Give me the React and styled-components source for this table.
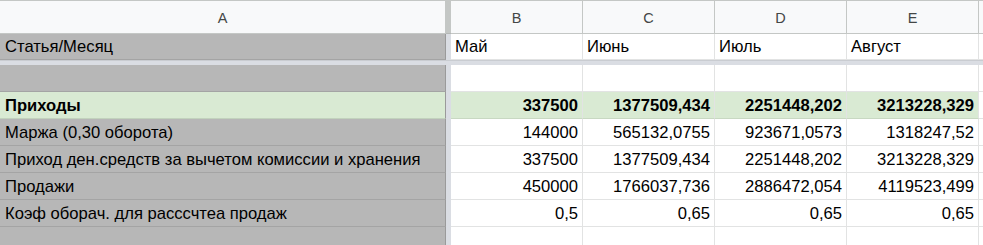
import React from 'react'
import styled, { createGlobalStyle } from 'styled-components'

const GlobalStyle = createGlobalStyle`
  html, body {
    margin: 0;
    padding: 0;
    background: #ffffff;
  }
  body {
    font-family: 'Liberation Sans', Arial, sans-serif;
    overflow: hidden;
  }
`

const columns = ['B', 'C', 'D', 'E']

const rows = [
  { label: 'Статья/Месяц', values: ['Май', 'Июнь', 'Июль', 'Август'], align: 'left' },
  { divider: true },
  { label: '', values: ['', '', '', ''] },
  {
    label: 'Приходы',
    values: ['337500', '1377509,434', '2251448,202', '3213228,329'],
    bold: true,
    green: true,
  },
  { label: 'Маржа (0,30 оборота)', values: ['144000', '565132,0755', '923671,0573', '1318247,52'] },
  {
    label: 'Приход ден.средств за вычетом комиссии и хранения',
    values: ['337500', '1377509,434', '2251448,202', '3213228,329'],
  },
  { label: 'Продажи', values: ['450000', '1766037,736', '2886472,054', '4119523,499'] },
  { label: 'Коэф оборач. для расссчтеа продаж', values: ['0,5', '0,65', '0,65', '0,65'] },
  { label: '', values: ['', '', '', ''] },
]

export default function App() {
  return (
    <>
      <GlobalStyle />
      <Sheet>
        <ColHeader $wide>A</ColHeader>
        <HeaderFreeze />
        {columns.map((c) => (
          <ColHeader key={c}>{c}</ColHeader>
        ))}
        <HeaderRest />

        {rows.map((row, i) =>
          row.divider ? (
            <FreezeRow key={i} />
          ) : (
            <React.Fragment key={i}>
              <LabelCell $bold={row.bold} $green={row.green}>
                {row.label}
              </LabelCell>
              <FreezeCol />
              {row.values.map((v, j) => (
                <Cell
                  key={j}
                  $bold={row.bold}
                  $green={row.green}
                  $align={row.align || 'right'}
                >
                  {v}
                </Cell>
              ))}
              <RestCell />
            </React.Fragment>
          )
        )}
      </Sheet>
    </>
  )
}

const Sheet = styled.div`
  display: grid;
  grid-template-columns: 446px 5px 132px 132px 132px 132px 1fr;
  grid-template-rows: 33px 26px 5px repeat(7, 27px);
  width: 983px;
  height: 245px;
  overflow: hidden;
  border-top: 1px solid #c4c7c5;
  box-sizing: border-box;
  font-size: 16.6px;
  color: #000000;
`

const ColHeader = styled.div`
  display: flex;
  align-items: center;
  justify-content: center;
  background: #f8f9fa;
  border-right: 1px solid #c4c7c5;
  border-bottom: 1px solid #c4c7c5;
  color: #444746;
  font-size: 14.5px;
  padding-top: 1px;
  box-sizing: border-box;
`

const HeaderFreeze = styled.div`
  background: #c4c7c5;
  border-bottom: 1px solid #b4b7b5;
`

const HeaderRest = styled.div`
  background: #f8f9fa;
  border-bottom: 1px solid #c4c7c5;
  box-sizing: border-box;
`

const FreezeRow = styled.div`
  grid-column: 1 / -1;
  background: #dadde3;
  border-top: 1px solid #c9ccd1;
  box-sizing: border-box;
`

const FreezeCol = styled.div`
  background: #dadde3;
`

const BaseCell = styled.div`
  display: flex;
  align-items: center;
  padding: 1px 4px 0 5px;
  box-sizing: border-box;
  white-space: nowrap;
  overflow: hidden;
  font-weight: ${(p) => (p.$bold ? 700 : 400)};
`

const LabelCell = styled(BaseCell)`
  background: ${(p) => (p.$green ? '#d9ead3' : '#b7b7b7')};
  border-right: 1px solid #9a9a9a;
  border-bottom: 1px solid rgba(0, 0, 0, 0.1);
`

const Cell = styled(BaseCell)`
  justify-content: ${(p) => (p.$align === 'left' ? 'flex-start' : 'flex-end')};
  padding: 1px 4px 0 4px;
  background: ${(p) => (p.$green ? '#d9ead3' : '#ffffff')};
  border-right: 1px solid #e2e3e3;
  border-bottom: 1px solid ${(p) => (p.$green ? '#c8d8c2' : '#e2e3e3')};
`

const RestCell = styled.div`
  background: #ffffff;
  border-bottom: 1px solid #e2e3e3;
`
